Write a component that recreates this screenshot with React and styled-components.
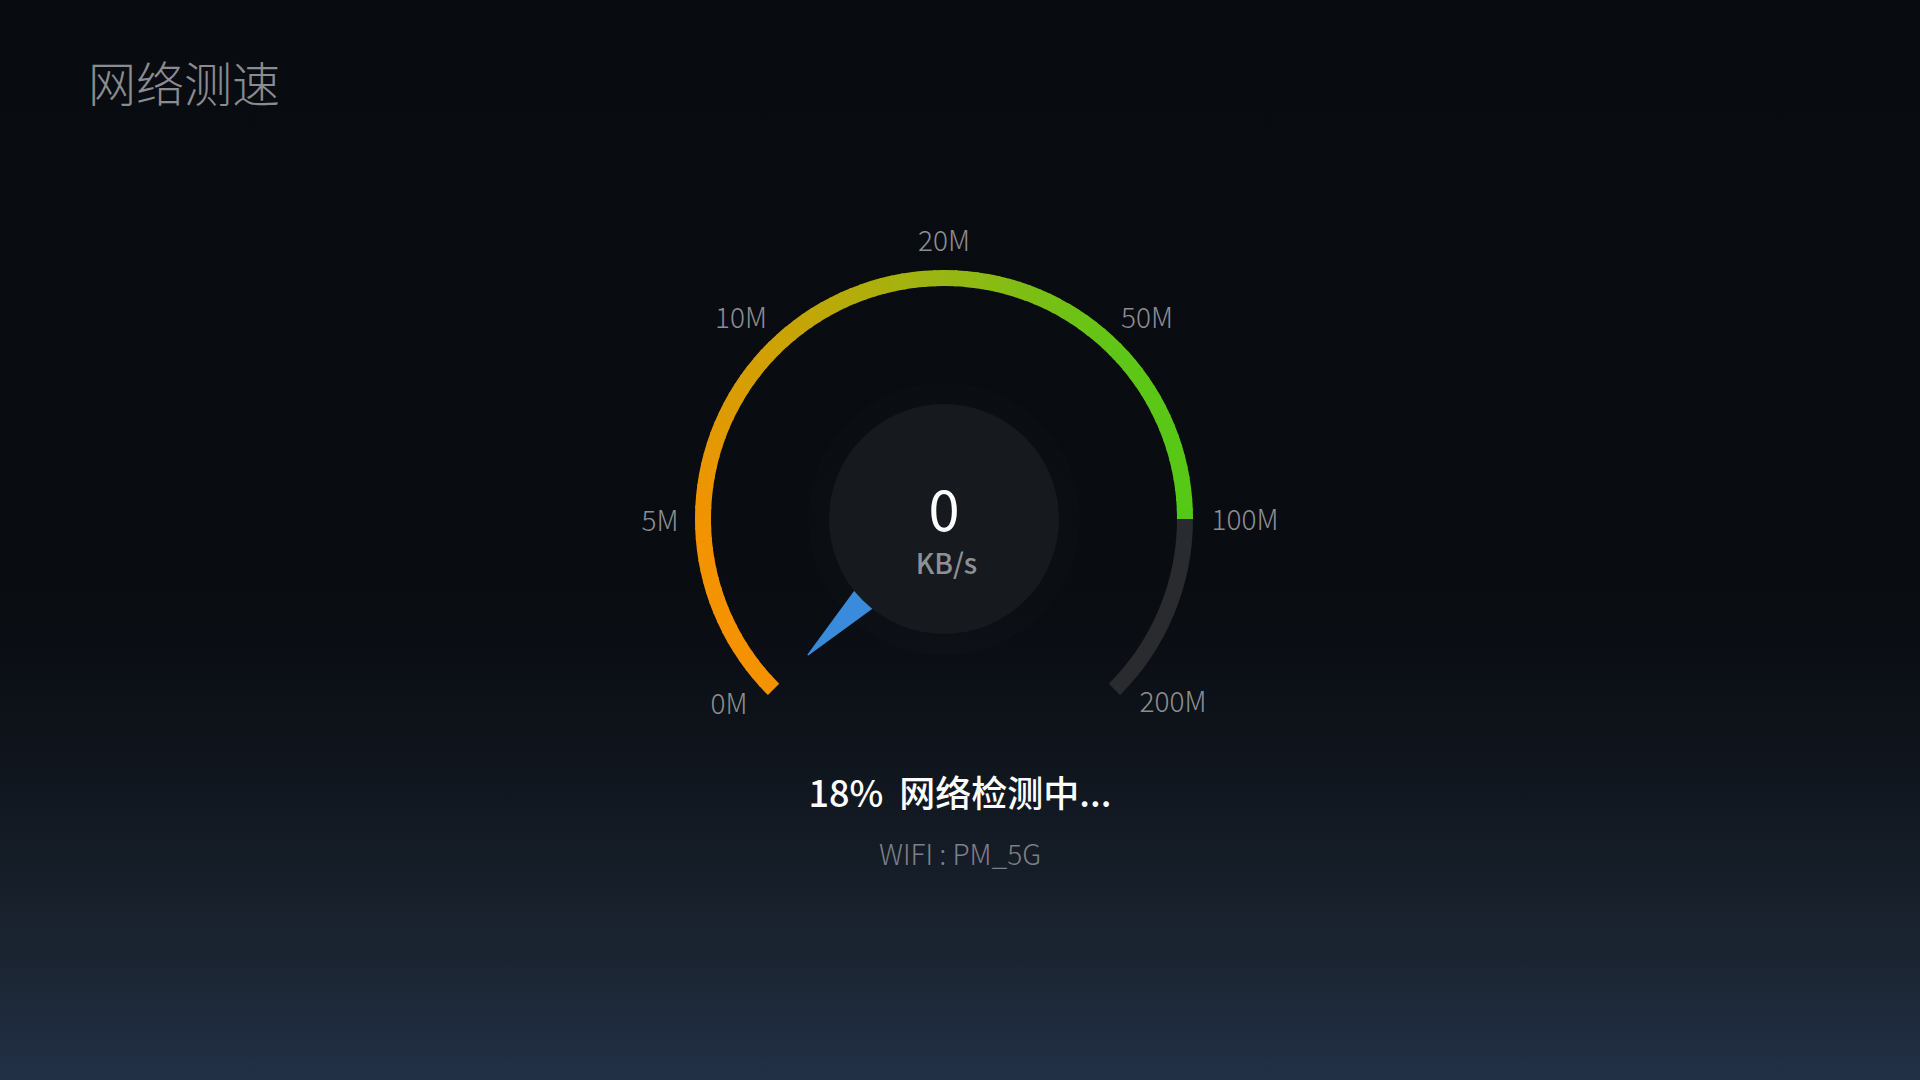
import styled, { createGlobalStyle } from "styled-components";

const GlobalStyle = createGlobalStyle`
  html, body {
    margin: 0;
    padding: 0;
  }
  body {
    font-family: "Noto Sans CJK SC", "Noto Sans", sans-serif;
    background: #080b10;
  }
`;

// gauge geometry
const CX = 320;
const CY = 300;
const R = 241;
const SWEEP = 270;
const FILL_END = 225; // 100M

const stops = [
  [0, [245, 146, 0]],
  [45, [242, 147, 0]],
  [90, [206, 161, 3]],
  [135, [152, 183, 18]],
  [180, [95, 198, 23]],
  [225, [85, 200, 22]],
];

const mix = (t) => {
  for (let i = 0; i < stops.length - 1; i++) {
    const [a, ca] = stops[i];
    const [b, cb] = stops[i + 1];
    if (t >= a && t <= b) {
      const k = (t - a) / (b - a);
      const c = ca.map((v, j) => Math.round(v + (cb[j] - v) * k));
      return `rgb(${c[0]},${c[1]},${c[2]})`;
    }
  }
  return "rgb(85,200,22)";
};

const point = (t, r = R) => {
  const a = ((225 - t) * Math.PI) / 180;
  return [CX + r * Math.cos(a), CY - r * Math.sin(a)];
};

const arc = (t0, t1) => {
  const [x0, y0] = point(t0);
  const [x1, y1] = point(t1);
  const large = t1 - t0 > 180 ? 1 : 0;
  return `M ${x0} ${y0} A ${R} ${R} 0 ${large} 1 ${x1} ${y1}`;
};

const segments = [];
const STEP = 2.5;
for (let t = 0; t < FILL_END; t += STEP) {
  const end = Math.min(t + STEP + 0.6, FILL_END);
  segments.push({ d: arc(t, end), color: mix(t + STEP / 2) });
}

const labels = [
  { text: "0M", x: 105, y: 485 },
  { text: "5M", x: 36, y: 302 },
  { text: "10M", x: 117, y: 99 },
  { text: "20M", x: 320, y: 22 },
  { text: "50M", x: 523, y: 99 },
  { text: "100M", x: 621, y: 301 },
  { text: "200M", x: 549, y: 483 },
];

const needle = () => {
  const tip = point(0, 192);
  const base = point(0, 95);
  const px = 0.7071 * 15;
  const py = 0.7071 * 15;
  return `M ${tip[0]} ${tip[1]} L ${base[0] + px} ${base[1] + py} L ${base[0] - px} ${base[1] - py} Z`;
};

const App = () => {
  return (
    <Page>
      <GlobalStyle />
      <Header>
        <Title>网络测速</Title>
      </Header>
      <Main>
        <Gauge>
          <svg width="640" height="500" viewBox="0 0 640 500">
            <circle cx={CX} cy={CY} r="136" fill="rgba(255,255,255,0.01)" />
            {segments.map((s, i) => (
              <path key={i} d={s.d} stroke={s.color} strokeWidth="16" fill="none" />
            ))}
            <path d={arc(FILL_END, SWEEP)} stroke="#2a2b2f" strokeWidth="16" fill="none" />
            <path d={needle()} fill="#3a8bdb" stroke="#3a8bdb" strokeWidth="1.5" strokeLinejoin="round" />
          </svg>
          {labels.map((l) => (
            <Tick key={l.text} style={{ left: l.x, top: l.y }}>
              {l.text}
            </Tick>
          ))}
          <Readout>
            <Value>0</Value>
            <Unit>KB/s</Unit>
          </Readout>
        </Gauge>
        <Status>
          18%<Phase>网络检测中...</Phase>
        </Status>
        <Network>WIFI : PM_5G</Network>
      </Main>
    </Page>
  );
};

export default App;

const Page = styled.div`
  width: 100%;
  min-height: 100vh;
  display: flex;
  flex-direction: column;
  background: linear-gradient(
    180deg,
    #080b10 0%,
    #090c11 55%,
    #0e131a 68%,
    #141b25 78%,
    #1b2532 89%,
    #223046 100%
  );
`;

const Header = styled.header`
  padding: 57px 0 0 88px;
`;

const Title = styled.h1`
  margin: 0;
  font-size: 48px;
  line-height: 1;
  font-weight: 300;
  color: #8a8c90;
`;

const Main = styled.main`
  display: flex;
  flex-direction: column;
  align-items: center;
  padding-top: 114px;
`;

const Gauge = styled.div`
  position: relative;
  width: 640px;
  height: 500px;
  margin-right: 32px;

  svg {
    display: block;
  }
`;

const Tick = styled.span`
  position: absolute;
  transform: translate(-50%, -50%);
  margin-top: -2px;
  font-size: 28px;
  line-height: 1;
  font-weight: 300;
  color: #8b8e93;
  white-space: nowrap;
`;

const Readout = styled.div`
  position: absolute;
  left: ${CX - 115}px;
  top: ${CY - 115}px;
  width: 230px;
  height: 230px;
  border-radius: 50%;
  background: #16191e;
  display: flex;
  flex-direction: column;
  align-items: center;
  padding-top: 75px;
  box-sizing: border-box;
`;

const Value = styled.div`
  font-size: 56px;
  line-height: 1;
  color: #ffffff;
  font-weight: 400;
`;

const Unit = styled.div`
  margin-top: 13px;
  margin-left: 5px;
  font-size: 28px;
  line-height: 1;
  font-weight: 500;
  color: #8d9096;
`;

const Status = styled.div`
  margin-top: 54px;
  font-size: 36px;
  line-height: 1;
  font-weight: 500;
  color: #ffffff;
  white-space: nowrap;
`;

const Phase = styled.span`
  margin-left: 16px;
`;

const Network = styled.div`
  margin-top: 30px;
  font-size: 28px;
  line-height: 1;
  font-weight: 300;
  color: #7d8086;
`;
